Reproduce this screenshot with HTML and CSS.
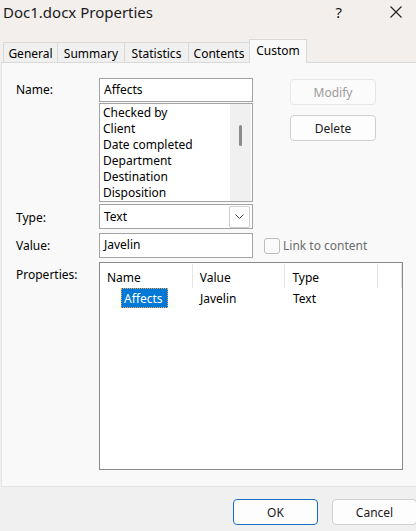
FILE: index.html
```html
<!DOCTYPE html>
<html lang="en">
<head>
<meta charset="utf-8">
<title>Doc1.docx Properties</title>
<link rel="stylesheet" href="styles.css">
</head>
<body>
<div class="window">
  <header class="titlebar">
    <span class="title">Doc1.docx Properties</span>
    <span class="help">?</span>
    <span class="close">
      <svg width="12" height="12" viewBox="0 0 12 12"><path d="M0.5 0.5 L11.5 11.5 M11.5 0.5 L0.5 11.5" stroke="#1f1f1f" stroke-width="1.1" fill="none"/></svg>
    </span>
  </header>
  <nav class="tabs">
    <div class="tab tab-general">General</div>
    <div class="tab tab-summary">Summary</div>
    <div class="tab tab-stats">Statistics</div>
    <div class="tab tab-contents">Contents</div>
    <div class="tab tab-custom active">Custom</div>
  </nav>
  <section class="panel">
    <div class="form">
      <div class="lbl lbl-name">Name:</div>
      <div class="name-col">
        <div class="field">Affects</div>
        <div class="listbox">
          <ul class="items">
            <li>Checked by</li>
            <li>Client</li>
            <li>Date completed</li>
            <li>Department</li>
            <li>Destination</li>
            <li>Disposition</li>
          </ul>
          <div class="scroll"><div class="thumb"></div></div>
        </div>
      </div>
      <div class="btn-col">
        <div class="btn disabled">Modify</div>
        <div class="btn">Delete</div>
      </div>

      <div class="lbl lbl-type">Type:</div>
      <div class="combo">
        <span class="combo-text">Text</span>
        <span class="arrow"><svg width="9" height="5" viewBox="0 0 9 5"><path d="M0.5 0.5 L4.5 4.5 L8.5 0.5" stroke="#444" stroke-width="1" fill="none"/></svg></span>
      </div>
      <div class="empty"></div>

      <div class="lbl lbl-value">Value:</div>
      <div class="field value">Javelin</div>
      <div class="check"><span class="box"></span><span class="check-text">Link to content</span></div>

      <div class="lbl lbl-props">Properties:</div>
      <div class="proplist">
        <div class="prow head">
          <div class="cell c1">Name</div>
          <div class="cell c2">Value</div>
          <div class="cell c3">Type</div>
          <div class="cell c4"></div>
        </div>
        <div class="prow data">
          <div class="cell c1"><span class="sel">Affects</span></div>
          <div class="cell c2">Javelin</div>
          <div class="cell c3">Text</div>
        </div>
      </div>
    </div>
  </section>
  <footer class="footer">
    <div class="btn ok">OK</div>
    <div class="btn">Cancel</div>
  </footer>
</div>
</body>
</html>
```

FILE: styles.css
```css
* { box-sizing: border-box; }
html, body {
  margin: 0;
  padding: 0;
  width: 416px;
  height: 531px;
  overflow: hidden;
  background: #f0f0f0;
}
body {
  font-family: "Noto Sans", "Open Sans", sans-serif;
  font-size: 12px;
  color: #000;
}
.window {
  width: 417px;
  height: 531px;
  display: flex;
  flex-direction: column;
}
.titlebar {
  height: 31px;
  background: #f3efed;
  display: flex;
  align-items: center;
  padding-left: 3px;
  padding-bottom: 8px;
}
.title {
  font-size: 15px;
  color: #1a1a1a;
  flex: 1;
}
.help {
  font-size: 15px;
  color: #1a1a1a;
  margin-right: 48px;
}
.close {
  display: flex;
  margin-right: 15px;
}
.tabs {
  height: 31px;
  background: #f3efed;
  display: flex;
  align-items: flex-end;
  padding-left: 3px;
}
.tab {
  height: 20px;
  border: 1px solid #d9d9d9;
  border-bottom: none;
  border-right: none;
  background: #f0f0f0;
  display: flex;
  align-items: center;
  justify-content: center;
  padding-top: 1px;
}
.tab-general { width: 54px; }
.tab-summary { width: 67px; }
.tab-stats { width: 64px; }
.tab-contents { width: 61px; }
.tab.active {
  width: 58px;
  height: 24px;
  background: #f9f9f9;
  border-right: 1px solid #d9d9d9;
  margin-bottom: -1px;
  position: relative;
  z-index: 1;
  padding-top: 0;
  padding-bottom: 3px;
}
.panel {
  height: 425px;
  background: #f9f9f9;
  border-top: 1px solid #d9d9d9;
  border-left: 1px solid #e3e3e3;
  border-bottom: 1px solid #e3e3e3;
  margin-left: 1px;
  padding: 15px 0 0 14px;
}
.form {
  display: grid;
  grid-template-columns: 83px 154px 1fr;
  align-items: start;
}
.lbl {
  height: 24px;
  line-height: 24px;
}
.lbl-type { margin-top: 2px; height: 25px; line-height: 28px; }
.lbl-value { margin-top: 4px; height: 25px; line-height: 26px; }
.lbl-props { margin-top: 4px; line-height: 25px; }
.field {
  height: 24px;
  border: 1px solid #a3a3a3;
  background: #fff;
  padding-left: 4px;
  line-height: 21px;
}
.name-col {
  display: flex;
  flex-direction: column;
}
.listbox {
  margin-top: 1px;
  height: 99px;
  border: 1px solid #a3a3a3;
  background: #fff;
  display: flex;
}
.items {
  list-style: none;
  margin: 0;
  padding: 1px 0 0 3px;
  flex: 1;
  line-height: 16px;
}
.scroll {
  width: 21px;
  margin: 0 1px 0 0;
  background: #f0f0f0;
  display: flex;
  justify-content: center;
  padding-top: 21px;
}
.thumb {
  width: 3px;
  height: 21px;
  border-radius: 2px;
  background: #8a8a8a;
}
.btn-col {
  display: flex;
  flex-direction: column;
  gap: 10px;
  padding: 1px 0 0 37px;
}
.btn {
  width: 86px;
  height: 26px;
  border: 1px solid #d0d0d0;
  border-radius: 4px;
  background: #fdfdfd;
  display: flex;
  align-items: center;
  justify-content: center;
  color: #1a1a1a;
}
.btn.disabled {
  border-color: #e6e6e6;
  background: #fbfbfb;
  color: #9c9c9c;
}
.combo {
  margin-top: 2px;
  height: 25px;
  border: 1px solid #a3a3a3;
  background: #fff;
  display: flex;
  align-items: center;
  padding: 0 2px 0 4px;
}
.combo-text { flex: 1; }
.arrow {
  width: 21px;
  height: 22px;
  border: 1px solid #cfcfcf;
  border-radius: 2px;
  display: flex;
  align-items: center;
  justify-content: center;
}
.value {
  margin-top: 4px;
  height: 25px;
  line-height: 22px;
}
.check {
  margin-top: 4px;
  height: 25px;
  display: flex;
  align-items: center;
  padding-left: 11px;
  color: #6d6d6d;
}
.box {
  width: 16px;
  height: 16px;
  border: 1px solid #bdbdbd;
  border-radius: 3px;
  background: #fafafa;
  margin-right: 3px;
}
.proplist {
  grid-column: 2 / 4;
  margin-top: 4px;
  width: 304px;
  height: 208px;
  border: 1px solid #898989;
  background: #fff;
}
.prow {
  display: flex;
}
.prow.head {
  height: 25px;
  padding-top: 1px;
}
.cell {
  width: 93px;
  padding-left: 7px;
  display: flex;
  align-items: center;
}
.head .cell {
  border-right: 1px solid #e5e5e5;
  padding-top: 2px;
}
.head .c4 { width: 24px; padding: 0; }
.data {
  height: 20px;
}
.data .c1 { padding-left: 21px; }
.sel {
  height: 20px;
  padding: 0 4px 0 2px;
  background: #0078d7;
  color: #fff;
  border: 1px dotted #f0a050;
  display: flex;
  align-items: center;
}
.footer {
  flex: 1;
  display: flex;
  justify-content: flex-end;
  gap: 14px;
  padding-top: 12px;
}
.footer .btn { width: 85px; }
.btn.ok {
  border-color: #1a6fc4;
}
```
